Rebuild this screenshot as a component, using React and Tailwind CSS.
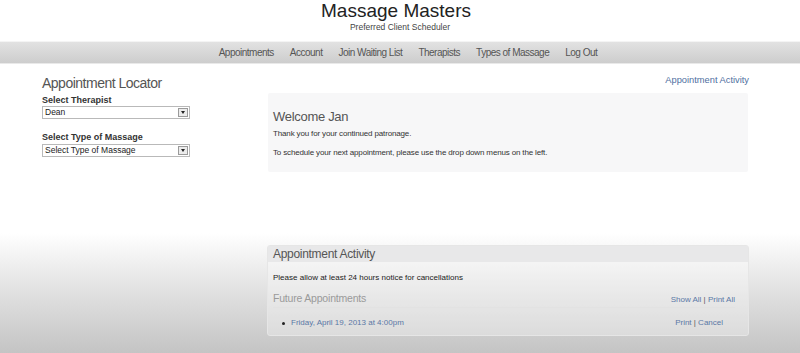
const navItems = ['Appointments', 'Account', 'Join Waiting List', 'Therapists', 'Types of Massage', 'Log Out'];

function FakeSelect({ value }) {
  return (
    <div className="flex items-center justify-between h-[13px] w-[148px] border border-[#b9b9b9] bg-white pl-[2px] pr-[1px]">
      <span className="text-[8.5px] leading-none text-[#222]">{value}</span>
      <span className="flex items-center justify-center w-[10px] h-[9px] border border-[#9a9a9a] bg-[#ececec]">
        <span className="w-0 h-0 border-l-[2px] border-r-[2px] border-t-[3px] border-l-transparent border-r-transparent border-t-[#222]" />
      </span>
    </div>
  );
}

export default function App() {
  return (
    <div
      className="w-full h-[353px] overflow-hidden bg-[linear-gradient(180deg,#ffffff_0%,#ffffff_66%,#e2e2e2_82%,#c4c4c4_100%)]"
      style={{ fontFamily: '"Liberation Sans", Arial, sans-serif' }}
    >
      {/* Header */}
      <div className="text-center pt-[1px]">
        <h1 className="text-[19px] leading-[20px] text-[#222] pr-[8px]">Massage Masters</h1>
        <p className="mt-[1px] text-[8.5px] leading-[10px] text-[#444]">Preferred Client Scheduler</p>
      </div>

      {/* Nav */}
      <div className="mt-[9px] h-[23px] border-t border-[#f4f4f4] border-b border-b-[#e9e9e9] bg-[linear-gradient(180deg,#e2e2e2,#cdcdcd)] flex items-center justify-center gap-[16px] pl-[16px] text-[10px] tracking-[-0.5px] text-[#555]">
        {navItems.map((n) => (
          <span key={n}>{n}</span>
        ))}
      </div>

      {/* Body */}
      <div className="flex pl-[42px] pr-[51px] pt-[11px]">
        {/* Left */}
        <div className="w-[200px] shrink-0">
          <h2 className="text-[14px] leading-[17px] tracking-[-0.5px] text-[#555]">Appointment Locator</h2>
          <div className="mt-[2px] text-[9px] leading-[12px] font-bold text-[#333]">Select Therapist</div>
          <FakeSelect value="Dean" />
          <div className="mt-[12px] text-[9px] leading-[12px] font-bold text-[#333]">Select Type of Massage</div>
          <div className="mt-[1px]">
            <FakeSelect value="Select Type of Massage" />
          </div>
        </div>

        {/* Right */}
        <div className="flex-1 pl-[25px]">
          <div className="text-right text-[9.3px] leading-[12px] text-[#4f6f9f] -mt-[1px]">Appointment Activity</div>

          <div className="mt-[7px] h-[79px] bg-[#f7f7f8] rounded-[2px] mx-[1px] px-[5px] pt-[16px]">
            <h3 className="text-[13px] leading-[15px] tracking-[-0.3px] text-[#555]">Welcome Jan</h3>
            <p className="mt-[5px] text-[8px] leading-[10px] tracking-[-0.15px] text-[#333]">Thank you for your continued patronage.</p>
            <p className="mt-[9px] text-[8px] leading-[10px] tracking-[-0.15px] text-[#333]">To schedule your next appointment, please use the drop down menus on the left.</p>
          </div>

          <div className="mt-[73px] h-[91px] border border-[#e6e6e6] rounded-[3px] bg-white/30">
            <div className="h-[16px] bg-[#e8e8e9] px-[5px] text-[12px] leading-[16px] tracking-[-0.3px] text-[#555]">Appointment Activity</div>
            <div className="px-[5px]">
              <p className="mt-[11px] text-[8px] leading-[10px] text-[#222]">Please allow at least 24 hours notice for cancellations</p>
              <div className="mt-[9px] flex items-end justify-between border-b border-[#e2e2e2] pb-[2px] mr-[8px]">
                <span className="text-[10.5px] leading-[13px] tracking-[-0.2px] text-[#9a9a9a]">Future Appointments</span>
                <span className="text-[8px] leading-[10px] text-[#5a78a6]">
                  Show All <span className="text-[#555]">|</span> Print All
                </span>
              </div>
              <div className="mt-[10px] flex items-center justify-between pl-[9px] pr-[20px] text-[8px] leading-[10px]">
                <span className="flex items-center gap-[6px]">
                  <span className="w-[3px] h-[3px] rounded-full bg-[#222]" />
                  <span className="text-[#5a78a6]">Friday, April 19, 2013 at 4:00pm</span>
                </span>
                <span className="text-[#5a78a6]">
                  Print <span className="text-[#555]">|</span> Cancel
                </span>
              </div>
            </div>
          </div>
        </div>
      </div>
    </div>
  );
}
